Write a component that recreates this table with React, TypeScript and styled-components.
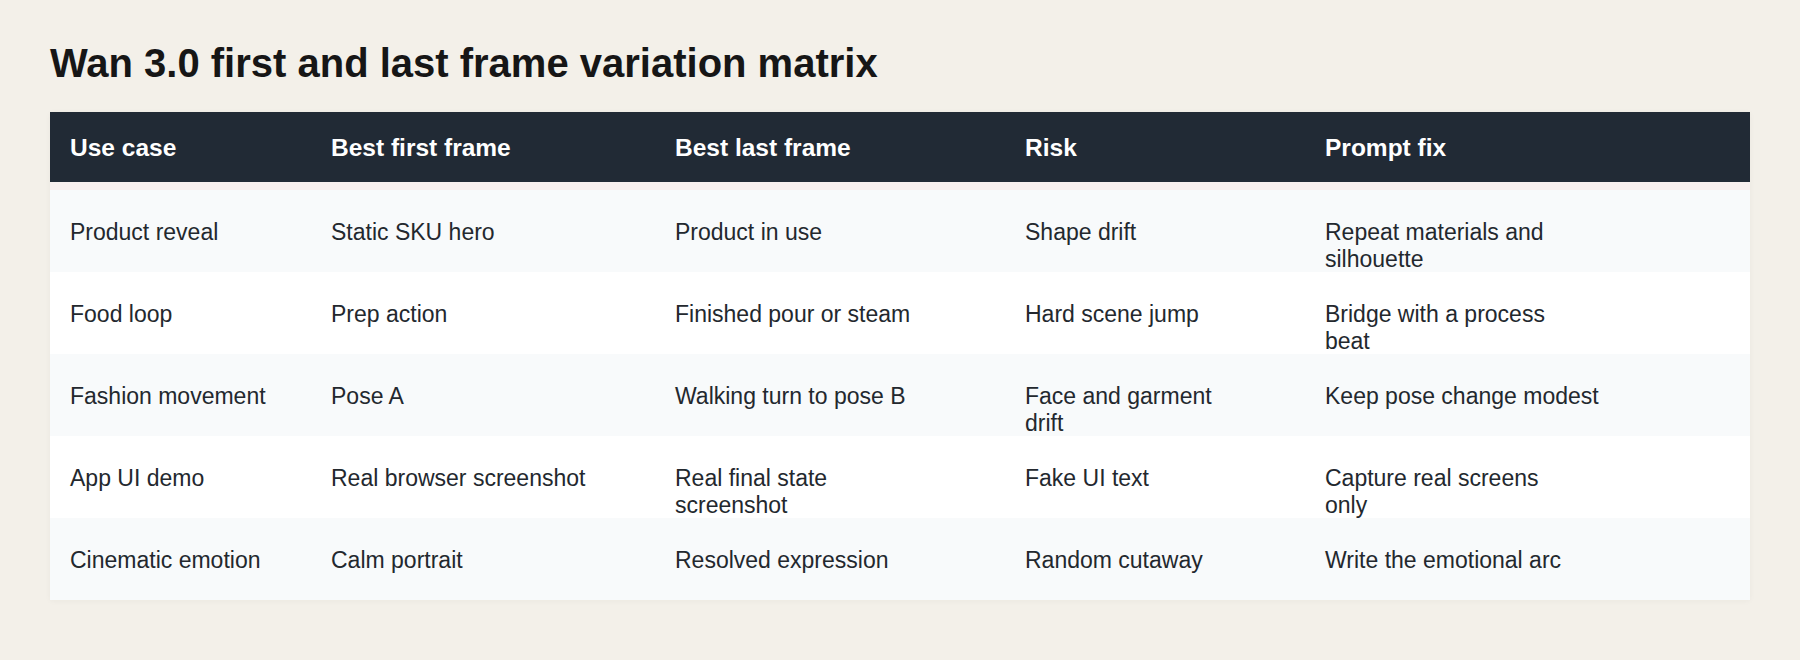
import styled, { createGlobalStyle } from "styled-components";

const GlobalStyle = createGlobalStyle`
  html, body {
    margin: 0;
    padding: 0;
    background: #f3f0e9;
  }
  body {
    font-family: "Liberation Sans", Arial, sans-serif;
    color: #23282e;
  }
`

const Page = styled.main`
  padding: 40px 50px 60px;
  min-height: 660px;
  box-sizing: border-box;
`

const Title = styled.h1`
  margin: 0 0 26px;
  font-size: 40px;
  line-height: 46px;
  font-weight: 700;
  color: #161616;
`

const Table = styled.div`
  display: flex;
  flex-direction: column;
  background: #f7efee;
  box-shadow: 0 1px 6px rgba(60, 40, 20, 0.04);
`

const Row = styled.div`
  display: grid;
  grid-template-columns: 261px 344px 350px 300px 1fr;
`

const HeadRow = styled(Row)`
  height: 70px;
  box-sizing: border-box;
  padding-top: 2px;
  align-items: center;
  background: #212a35;
  margin-bottom: 8px;
`

const HeadCell = styled.div`
  padding: 0 20px;
  font-size: 24.5px;
  font-weight: 700;
  color: #ffffff;
`

const BodyRow = styled(Row)<{ $shaded: boolean }>`
  height: 82px;
  background: ${(p) => (p.$shaded ? "#f8fafb" : "#ffffff")};
`

const Cell = styled.div`
  padding: 29px 20px 0;
  font-size: 23px;
  line-height: 27px;
  white-space: pre-line;
  color: #23282e;
`

const columns = ["Use case", "Best first frame", "Best last frame", "Risk", "Prompt fix"]

const rows = [
  ["Product reveal", "Static SKU hero", "Product in use", "Shape drift", "Repeat materials and\nsilhouette"],
  ["Food loop", "Prep action", "Finished pour or steam", "Hard scene jump", "Bridge with a process\nbeat"],
  ["Fashion movement", "Pose A", "Walking turn to pose B", "Face and garment\ndrift", "Keep pose change modest"],
  ["App UI demo", "Real browser screenshot", "Real final state\nscreenshot", "Fake UI text", "Capture real screens\nonly"],
  ["Cinematic emotion", "Calm portrait", "Resolved expression", "Random cutaway", "Write the emotional arc"],
]

export default function App() {
  return (
    <Page>
      <GlobalStyle />
      <Title>Wan 3.0 first and last frame variation matrix</Title>
      <Table>
        <HeadRow>
          {columns.map((c) => (
            <HeadCell key={c}>{c}</HeadCell>
          ))}
        </HeadRow>
        {rows.map((r, i) => (
          <BodyRow key={r[0]} $shaded={i % 2 === 0}>
            {r.map((text, j) => (
              <Cell key={j}>{text}</Cell>
            ))}
          </BodyRow>
        ))}
      </Table>
    </Page>
  )
}
